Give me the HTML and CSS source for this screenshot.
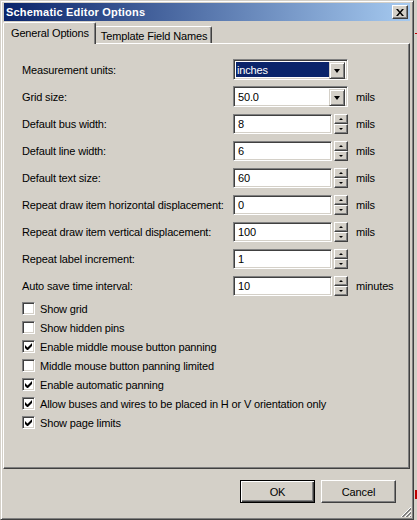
FILE: index.html
```html
<!DOCTYPE html>
<html>
<head>
<meta charset="utf-8">
<title>Schematic Editor Options</title>
<link rel="stylesheet" href="styles.css">
</head>
<body>
<div class="desk">
  <div class="window">
    <div class="titlebar">
      <span class="title">Schematic Editor Options</span>
      <span class="close"><svg width="8" height="7" viewBox="0 0 8 7"><path d="M0 0h2l2 2.5L6 0h2L5 3.5 8 7H6L4 4.5 2 7H0l3-3.5z" fill="#000"/></svg></span>
    </div>
    <div class="tabs">
      <div class="tab active">General Options</div>
      <div class="tab">Template Field Names</div>
    </div>
    <div class="panel">
      <div class="fields">
        <div class="row">
          <span class="label">Measurement units:</span>
          <div class="combo sel"><span class="val">inches</span><span class="drop"><i class="tri"></i></span></div>
        </div>
        <div class="row">
          <span class="label">Grid size:</span>
          <div class="combo"><span class="val">50.0</span><span class="drop"><i class="tri"></i></span></div>
          <span class="unit">mils</span>
        </div>
        <div class="row">
          <span class="label">Default bus width:</span>
          <div class="edit">8</div><div class="spin"><span class="up"><i></i></span><span class="dn"><i></i></span></div>
          <span class="unit">mils</span>
        </div>
        <div class="row">
          <span class="label">Default line width:</span>
          <div class="edit">6</div><div class="spin"><span class="up"><i></i></span><span class="dn"><i></i></span></div>
          <span class="unit">mils</span>
        </div>
        <div class="row">
          <span class="label">Default text size:</span>
          <div class="edit">60</div><div class="spin"><span class="up"><i></i></span><span class="dn"><i></i></span></div>
          <span class="unit">mils</span>
        </div>
        <div class="row">
          <span class="label">Repeat draw item horizontal displacement:</span>
          <div class="edit">0</div><div class="spin"><span class="up"><i></i></span><span class="dn"><i></i></span></div>
          <span class="unit">mils</span>
        </div>
        <div class="row">
          <span class="label">Repeat draw item vertical displacement:</span>
          <div class="edit">100</div><div class="spin"><span class="up"><i></i></span><span class="dn"><i></i></span></div>
          <span class="unit">mils</span>
        </div>
        <div class="row">
          <span class="label">Repeat label increment:</span>
          <div class="edit">1</div><div class="spin"><span class="up"><i></i></span><span class="dn"><i></i></span></div>
        </div>
        <div class="row">
          <span class="label">Auto save time interval:</span>
          <div class="edit">10</div><div class="spin"><span class="up"><i></i></span><span class="dn"><i></i></span></div>
          <span class="unit">minutes</span>
        </div>
      </div>
      <div class="checks">
        <div class="check"><span class="box"></span><span>Show grid</span></div>
        <div class="check"><span class="box"></span><span>Show hidden pins</span></div>
        <div class="check"><span class="box on"><svg width="7" height="7" viewBox="0 0 7 7"><path d="M0 2v3l2 2h1l4-4V0L2.5 4.5z" fill="#000"/></svg></span><span>Enable middle mouse button panning</span></div>
        <div class="check"><span class="box"></span><span>Middle mouse button panning limited</span></div>
        <div class="check"><span class="box on"><svg width="7" height="7" viewBox="0 0 7 7"><path d="M0 2v3l2 2h1l4-4V0L2.5 4.5z" fill="#000"/></svg></span><span>Enable automatic panning</span></div>
        <div class="check"><span class="box on"><svg width="7" height="7" viewBox="0 0 7 7"><path d="M0 2v3l2 2h1l4-4V0L2.5 4.5z" fill="#000"/></svg></span><span>Allow buses and wires to be placed in H or V orientation only</span></div>
        <div class="check"><span class="box on"><svg width="7" height="7" viewBox="0 0 7 7"><path d="M0 2v3l2 2h1l4-4V0L2.5 4.5z" fill="#000"/></svg></span><span>Show page limits</span></div>
      </div>
    </div>
    <div class="buttons">
      <div class="btn default"><span>OK</span></div>
      <div class="btn"><span>Cancel</span></div>
    </div>
    <svg class="grip" width="12" height="12" viewBox="0 0 12 12">
      <path d="M11 1L1 11M11 5L5 11M11 9L9 11" stroke="#fff" stroke-width="1"/>
      <path d="M11 2L2 11M11 3L3 11M11 6L6 11M11 7L7 11M11 10L10 11" stroke="#808080" stroke-width="1"/>
    </svg>
  </div>
  <div class="edge"><i class="r1"></i><i class="r2"></i></div>
</div>
</body>
</html>
```
FILE: styles.css
```css
* { box-sizing: border-box; }
html, body { margin: 0; padding: 0; }
body {
  width: 417px; height: 520px; overflow: hidden;
  background: #d4d0c8;
  font-family: Tahoma, "Liberation Sans", Arial, sans-serif;
  font-size: 11px; color: #000; letter-spacing: -0.15px;
}
.desk { display: flex; width: 417px; height: 520px; }
.window {
  position: relative;
  width: 414px; height: 520px;
  background: #d4d0c8;
  border-top: 1px solid #d4d0c8; border-left: 1px solid #d4d0c8;
  border-right: 1px solid #404040; border-bottom: 1px solid #404040;
  box-shadow: inset 1px 1px 0 #fff, inset -1px -1px 0 #808080;
  padding: 2px 3px 0 2px;
  display: flex; flex-direction: column;
}
.edge { flex: 1; position: relative; background: #d4d0c8; }
.edge i { position: absolute; left: 1px; width: 2px; background: #c00000; }
.edge .r1 { top: 33px; height: 1px; }
.edge .r2 { top: 490px; height: 9px; }
.titlebar {
  height: 18px; margin-left: 1px;
  background: linear-gradient(to right, #0a246a, #a6caf0);
  display: flex; align-items: center; justify-content: space-between;
  padding: 0 2px 0 2px;
}
.title { color: #fff; font-weight: bold; font-size: 11px; letter-spacing: 0.2px; }
.close {
  width: 16px; height: 14px; background: #d4d0c8;
  border-top: 1px solid #fff; border-left: 1px solid #fff;
  border-right: 1px solid #404040; border-bottom: 1px solid #404040;
  box-shadow: inset -1px -1px 0 #808080;
  display: flex; align-items: center; justify-content: center;
}
.tabs { display: flex; align-items: flex-end; height: 22px; padding-left: 1px; }
.tab {
  height: 18px; padding: 0 4px 0 5px;
  border-top: 1px solid #fff; border-left: 1px solid #fff;
  border-right: 1px solid #404040;
  box-shadow: inset -1px 0 0 #808080;
  border-radius: 2px 2px 0 0;
  display: flex; align-items: center;
  margin-bottom: -1px;
}
.tab.active {
  height: 22px; padding: 0 6px 0 7px; position: relative; z-index: 1;
  background: #d4d0c8; margin-left: -1px; margin-right: -1px;
  padding-bottom: 2px;
}
.panel {
  height: 426px;
  border-top: 1px solid #fff; border-left: 1px solid #fff;
  border-right: 1px solid #404040; border-bottom: 1px solid #404040;
  box-shadow: inset -1px -1px 0 #808080;
  padding: 15px 0 0 18px;
}
.fields { display: flex; flex-direction: column; gap: 6px; }
.row { display: flex; align-items: center; height: 21px; }
.label { width: 211px; }
.combo {
  width: 115px; height: 21px; display: flex; padding: 2px;
  border-top: 1px solid #808080; border-left: 1px solid #808080;
  border-right: 1px solid #fff; border-bottom: 1px solid #fff;
  box-shadow: inset 1px 1px 0 #404040, inset -1px -1px 0 #d4d0c8;
  background: #fff;
}
.combo .val { flex: 1; display: flex; align-items: center; padding-left: 2px; }
.combo.sel .val { background: #0a246a; color: #fff; padding-left: 1px; }
.drop {
  width: 16px; height: 17px;
  background: #d4d0c8;
  border-top: 1px solid #d4d0c8; border-left: 1px solid #d4d0c8;
  border-right: 1px solid #404040; border-bottom: 1px solid #404040;
  box-shadow: inset 1px 1px 0 #fff, inset -1px -1px 0 #808080;
  display: flex; align-items: center; justify-content: center;
}
.tri { width: 0; height: 0; border-left: 3.5px solid transparent; border-right: 3.5px solid transparent; border-top: 4px solid #000; }
.edit {
  width: 99px; height: 20px; background: #fff; padding: 0 0 0 4px;
  border-top: 1px solid #808080; border-left: 1px solid #808080;
  border-right: 1px solid #fff; border-bottom: 1px solid #fff;
  box-shadow: inset 1px 1px 0 #404040, inset -1px -1px 0 #d4d0c8;
  display: flex; align-items: center;
}
.spin { width: 14px; height: 20px; margin-left: 2px; display: flex; flex-direction: column; }
.spin span {
  flex: 1; background: #d4d0c8;
  border-top: 1px solid #fff; border-left: 1px solid #fff;
  border-right: 1px solid #404040; border-bottom: 1px solid #404040;
  box-shadow: inset -1px -1px 0 #808080;
  display: flex; align-items: center; justify-content: center;
}
.spin .up i { width: 0; height: 0; border-left: 2px solid transparent; border-right: 2px solid transparent; border-bottom: 2px solid #000; }
.spin .dn i { width: 0; height: 0; border-left: 2px solid transparent; border-right: 2px solid transparent; border-top: 2px solid #000; }
.unit { margin-left: 8px; }
.checks { display: flex; flex-direction: column; gap: 6px; margin-top: 6px; }
.check { display: flex; align-items: center; height: 13px; }
.box {
  width: 13px; height: 13px; background: #fff; margin-right: 5px;
  border-top: 1px solid #808080; border-left: 1px solid #808080;
  border-right: 1px solid #fff; border-bottom: 1px solid #fff;
  box-shadow: inset 1px 1px 0 #404040, inset -1px -1px 0 #d4d0c8;
  display: flex; align-items: center; justify-content: center;
}
.buttons { display: flex; justify-content: flex-end; gap: 6px; padding: 11px 14px 0 0; }
.btn {
  width: 75px; height: 23px; background: #d4d0c8;
  border-top: 1px solid #fff; border-left: 1px solid #fff;
  border-right: 1px solid #404040; border-bottom: 1px solid #404040;
  box-shadow: inset -1px -1px 0 #808080;
  display: flex; align-items: center; justify-content: center;
}
.btn.default {
  border: 1px solid #000;
  box-shadow: inset 1px 1px 0 #fff, inset -1px -1px 0 #404040, inset -2px -2px 0 #808080;
}
.grip { position: absolute; right: 1px; bottom: 1px; }
```
